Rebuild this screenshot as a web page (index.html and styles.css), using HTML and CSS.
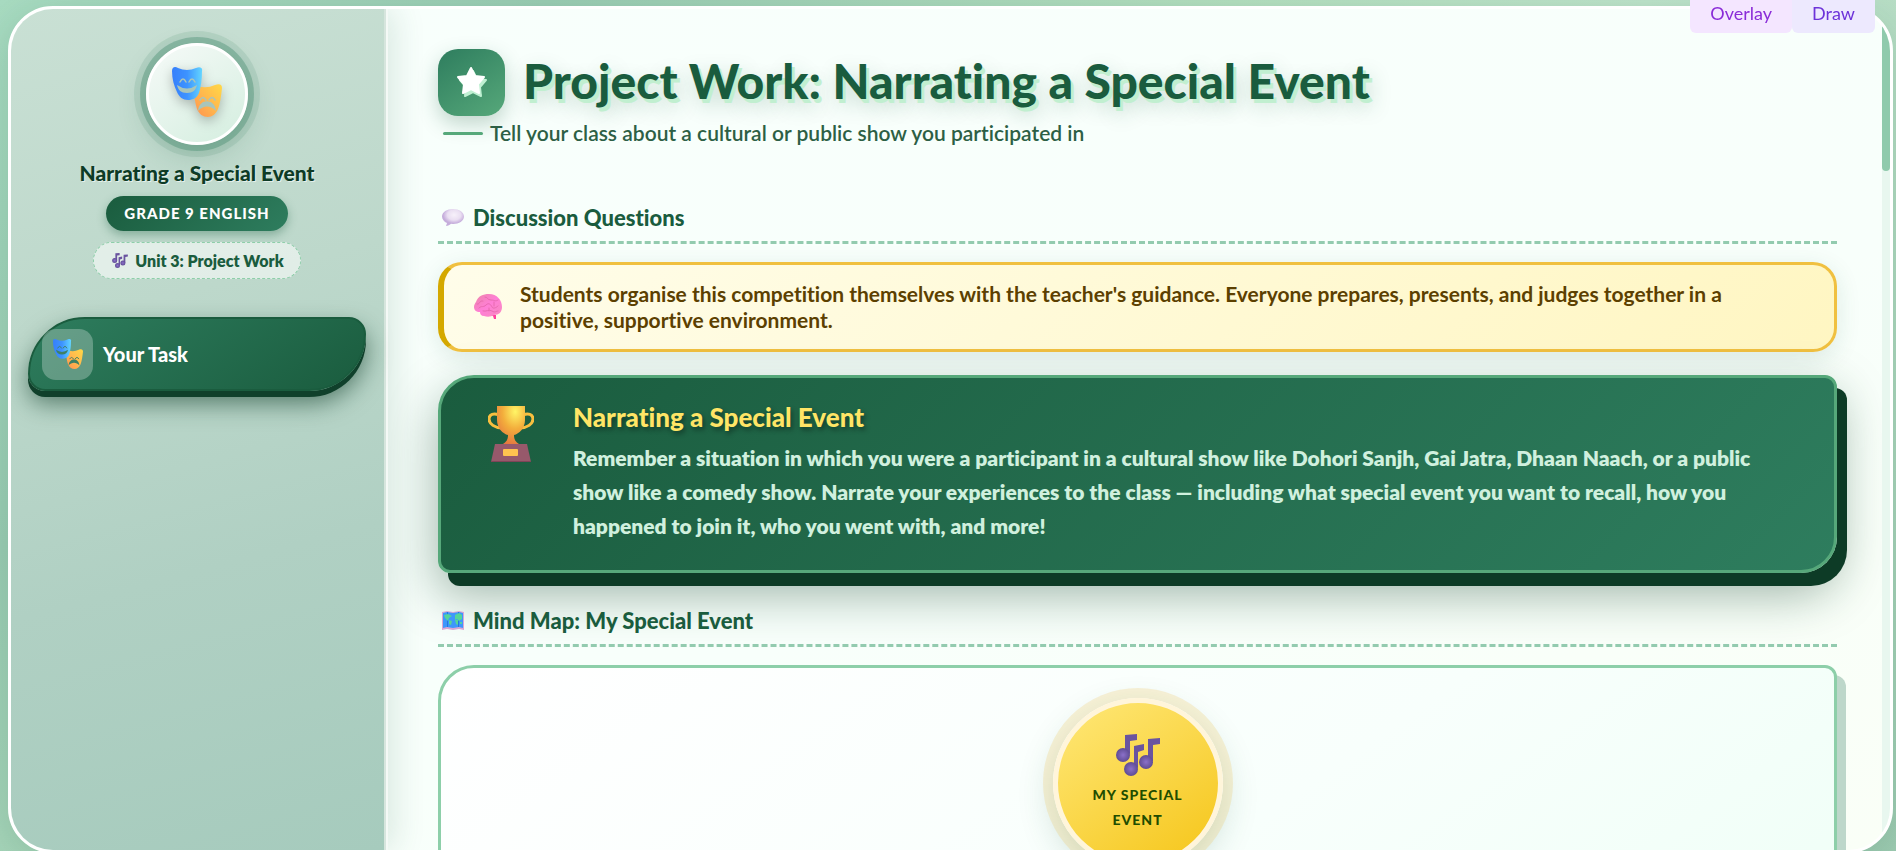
FILE: index.html
```html
<!DOCTYPE html>
<html lang="en">

<head>
  <meta charset="UTF-8">
  <meta name="viewport" content="width=device-width, initial-scale=1.0">
  <title>Project Work: Narrating a Special Event</title>
  <link rel="stylesheet" href="styles.css">
</head>

<body>
  <!-- shared icons -->
  <svg class="icon-defs" width="0" height="0" aria-hidden="true">
    <defs>
      <linearGradient id="blueMask" x1="0" y1="0" x2="1" y2="0">
        <stop offset="0" stop-color="#367ffb" />
        <stop offset="0.5" stop-color="#3d93ff" />
        <stop offset="1" stop-color="#64d6ff" />
      </linearGradient>
      <linearGradient id="goldMask" x1="0" y1="1" x2="1" y2="0">
        <stop offset="0" stop-color="#ff9150" />
        <stop offset="0.5" stop-color="#ffb84e" />
        <stop offset="1" stop-color="#ffd946" />
      </linearGradient>
      <radialGradient id="noteBall">
        <stop offset="0" stop-color="#8b70c9" />
        <stop offset="1" stop-color="#5f4c94" />
      </radialGradient>
      <symbol id="masks" viewBox="0 0 50 50">
        <path fill="url(#goldMask)" d="M22 20q2-2 4-1 8 3 17-1c5-2 7 0 7 3-1 9-2 16-4 21-2 5-6 8-10 8-5 0-9-3-11-8-2-6-3-13-3-22z" />
        <path fill="url(#blueMask)" d="M0 4c0-4 3-5 6-3q9 4 18 0c4-2 7 0 6 3 0 8-1 16-3 22-2 5-6 7-11 7s-9-3-11-8C2 19 0 12 0 4z" />
        <path fill="currentColor" d="M5 18q10 7 20 0c-1 5-4 8-10 8s-9-3-10-8zM26 44c1-13 17-13 18 0-5-6-13-6-18 0z" />
        <path fill="none" stroke="currentColor" stroke-width="1.5" stroke-linecap="round" d="M8 15q3-6 6 0M17 15q3-6 6 0M28 33q3-5 6 0M37 33q3-5 6 0" />
      </symbol>
      <symbol id="notes" viewBox="0 0 44 42">
        <g fill="#6a549f">
          <path d="M9 18V1l12-1v6l-7 1v13zM18 32V12l10-2v6l-6 2v16zM32 27V5l12-1v6l-7 1v16z" />
          <circle cx="7" cy="21" r="7" fill="url(#noteBall)" />
          <circle cx="15" cy="35" r="7" fill="url(#noteBall)" />
          <circle cx="30" cy="28" r="7" fill="url(#noteBall)" />
        </g>
      </symbol>
    </defs>
  </svg>

  <div class="toolbar">
    <button type="button" class="tool-btn tool-overlay">Overlay</button>
    <button type="button" class="tool-btn tool-draw">Draw</button>
  </div>

  <div class="app">
    <aside class="sidebar">
      <div class="avatar"><svg width="50" height="50" aria-hidden="true"><use href="#masks" /></svg></div>
      <h2 class="sidebar-title">Narrating a Special Event</h2>
      <span class="grade-badge">Grade 9 English</span>
      <span class="unit-badge"><svg width="16" height="15" aria-hidden="true"><use href="#notes" /></svg>Unit 3: Project Work</span>
      <nav class="side-nav">
        <button type="button" class="nav-btn active">
          <span class="nav-icon"><svg width="30" height="30" aria-hidden="true"><use href="#masks" /></svg></span>
          Your Task
        </button>
      </nav>
    </aside>

    <main class="main">
      <header class="page-header">
        <div class="title-row">
          <div class="title-icon">
            <svg width="34" height="34" viewBox="0 0 34 34" aria-hidden="true">
              <path class="star-shadow" d="M18 5l4 8 9 1-6 7 1 9-8-4-8 4 1-9-6-7 9-1z" />
              <path class="star" d="M16 2l4 8 9 1-6 7 1 9-8-4-8 4 1-9-6-7 9-1z" />
            </svg>
          </div>
          <h1 class="page-title">Project Work: Narrating a Special Event</h1>
        </div>
        <p class="page-subtitle">Tell your class about a cultural or public show you participated in</p>
      </header>

      <section class="section">
        <h3 class="section-title">
          <svg width="22" height="18" viewBox="0 0 22 18" aria-hidden="true">
            <defs>
              <radialGradient id="bubble" cx="0.55" cy="0.35">
                <stop offset="0" stop-color="#f7f1fa" />
                <stop offset="0.6" stop-color="#eadff2" />
                <stop offset="1" stop-color="#c5addb" />
              </radialGradient>
            </defs>
            <path fill="url(#bubble)" d="M11 0c6 0 11 3 11 7.500S17 15 11 15l-2-.2C8 16 6 17 4 17l1-3C2 13 0 10 0 7.500 0 3 5 0 11 0z" />
          </svg>
          Discussion Questions
        </h3>

        <div class="info-box">
          <svg width="28" height="26" viewBox="0 0 28 26" aria-hidden="true">
            <defs>
              <linearGradient id="brain" x1="0" y1="0" x2="1" y2="1">
                <stop offset="0" stop-color="#ed86a8" />
                <stop offset="0.5" stop-color="#ff7fd6" />
                <stop offset="1" stop-color="#f88abf" />
              </linearGradient>
            </defs>
            <path fill="#ff3f9f" d="M16 21h6v4l-2 0-1-3z" />
            <path fill="url(#brain)" d="M2 8C4 2 9 0 15 0c8 0 13 6 13 13 0 5-3 8-8 8-3 2-7 2-10 1-3 0-4-2-4-4-4 0-6-2-6-5 0-2 1-4 2-5z" />
            <path fill="none" stroke="#e86bb0" stroke-width="1" stroke-linecap="round" d="M3 10c3 1 2-4 6-3M11 3c3 0 2 3 6 3s4 2 7 0M5 14c3-3 4 0 7-3s5 0 6 2 4 1 6-1M9 17c3 1 6-2 9 0s4 0 6 0M20 8v4M15 17v-3" />
          </svg>
          <p>Students organise this competition themselves with the teacher's guidance. Everyone prepares, presents, and judges together in a positive, supportive environment.</p>
        </div>

        <div class="task-card">
          <svg width="46" height="56" viewBox="0 0 46 56" aria-hidden="true">
            <defs>
              <radialGradient id="cup" cx="0.65" cy="0.15" r="0.9">
                <stop offset="0" stop-color="#fff566" />
                <stop offset="0.5" stop-color="#f3ae3c" />
                <stop offset="1" stop-color="#e5763f" />
              </radialGradient>
            </defs>
            <path class="cup-handle" d="M11 9C6 7 1 8 1 13s6 9 13 9M35 9c5-2 10-1 10 4s-6 9-13 9" />
            <path fill="url(#cup)" d="M9 0h28v14c0 8-6 14-11 15 0 5 2 7 5 9H15c3-2 5-4 5-9C15 28 9 22 9 14z" />
            <path fill="#97596b" d="M7 38h32l4 18H3z" />
            <path fill="#7f4458" d="M3 55h40v1H3z" />
            <rect x="15" y="43" width="15" height="7" rx="1" fill="#ffc34f" />
          </svg>
          <div class="task-body">
            <h2 class="task-title">Narrating a Special Event</h2>
            <p class="task-text">Remember a situation in which you were a participant in a cultural show like Dohori Sanjh, Gai Jatra, Dhaan Naach, or a public show like a comedy show. Narrate your experiences to the class — including what special event you want to recall, how you happened to join it, who you went with, and more!</p>
          </div>
        </div>
      </section>

      <section class="section">
        <h3 class="section-title">
          <svg width="22" height="20" viewBox="0 0 22 20" aria-hidden="true">
            <path fill="#d9a6d4" d="M0 1l5-1 6 1 6-1 5 1v18l-5-1-6 1-6-1-5 1z" />
            <path fill="#3e97fb" d="M1 2l4-1 6 1 6-1 4 1v15l-4-1-6 1-6-1-4 1z" />
            <path fill="#2479dc" d="M5 1l1 0v15l-1 0zM16 1l1 0v15l-1 0z" />
            <path fill="#55d59a" d="M2 4l4-1 4 2-3 2-1 3-3-3zM7 9l3 1-1 4-2-1zM13 4l4-2 3 2v4l-3 2-2-2-2 1zM13 9l3 0v5l-2-1zM18 11h2v2h-2z" />
          </svg>
          Mind Map: My Special Event
        </h3>

        <div class="mindmap">
          <div class="mindmap-center">
            <svg width="44" height="42" aria-hidden="true"><use href="#notes" /></svg>
            <span>My Special Event</span>
          </div>
        </div>
      </section>
    </main>

    <div class="scroll-track" aria-hidden="true">
      <div class="scroll-thumb"></div>
    </div>
  </div>
</body>

</html>
```
FILE: styles.css
```css
* {
  margin: 0;
  padding: 0;
  box-sizing: border-box;
}

body {
  font-family: Lato, 'Noto Sans', sans-serif;
  font-variant-ligatures: none;
  background: linear-gradient(135deg, #a8dbc1 0%, #9bccb4 20%, #b5dfc0 45%, #bfe3cb 60%, #9ecbb2 100%);
  height: 100vh;
  padding: 6px 3px 0 8px;
  overflow: hidden;
}

button {
  font-family: inherit;
  cursor: pointer;
}

svg {
  display: block;
  flex-shrink: 0;
}

.icon-defs {
  position: absolute;
}

/* floating tool buttons */
.toolbar {
  position: fixed;
  top: -7px;
  right: 21px;
  display: flex;
  z-index: 10;
}

.tool-btn {
  height: 40px;
  padding: 0 20px;
  border: none;
  border-radius: 6px;
  font-size: 18px;
}

.tool-overlay {
  background: #f4e6ff;
  color: #8a2bd8;
}

.tool-draw {
  background: #ede9fe;
  color: #6d33d9;
}

.app {
  display: flex;
  height: calc(100vh - 4px);
  border: 3px solid #fff;
  border-radius: 45px;
  background: linear-gradient(160deg, #f8fffc 0%, #f8fffb 60%, #fafff7 100%);
  box-shadow: 0 10px 40px rgba(26, 92, 62, 0.18);
  overflow: hidden;
}

/* sidebar */
.sidebar {
  flex: 0 0 377px;
  display: flex;
  flex-direction: column;
  align-items: center;
  padding: 34px 20px 20px 17px;
  background: linear-gradient(165deg, #c9e0d4 0%, #bdd8cb 35%, #b0d0c3 65%, #a6cbbd 100%);
  border-right: 2px solid #f4f9f6;
  box-shadow: inset -2px 0 0 #d6e5dd, 6px 0 30px rgba(26, 92, 62, 0.14);
  z-index: 1;
}

.avatar {
  display: flex;
  align-items: center;
  justify-content: center;
  width: 102px;
  height: 102px;
  padding-bottom: 4px;
  border: 3px solid #fff;
  border-radius: 50%;
  background: linear-gradient(145deg, #f6faf8, #d4eedf);
  box-shadow: 0 0 0 6px rgba(46, 125, 94, 0.32), 0 0 0 12px rgba(46, 125, 94, 0.12), 0 10px 30px rgba(26, 92, 62, 0.2);
  color: #a9c5ba;
}

.avatar svg {
  filter: drop-shadow(0 4px 6px rgba(0, 0, 0, 0.25));
}

.sidebar-title {
  margin-top: 14px;
  font-size: 21px;
  font-weight: 900;
  line-height: 28px;
  color: #0d3b26;
  text-shadow: 1px 1px 0 rgba(255, 255, 255, 0.6);
}

.grade-badge {
  margin-top: 9px;
  padding: 0 18px;
  border-radius: 18px;
  background: linear-gradient(135deg, #1a5c3e, #2e7d5e);
  box-shadow: 0 4px 10px rgba(26, 92, 62, 0.35);
  color: #fff;
  font-size: 15px;
  font-weight: 900;
  line-height: 35px;
  letter-spacing: 1px;
  text-transform: uppercase;
}

.unit-badge {
  display: flex;
  align-items: center;
  gap: 7px;
  height: 37px;
  margin-top: 11px;
  padding: 0 16px 0 18px;
  border: 1px dashed #8dcfa9;
  border-radius: 19px;
  background: rgba(255, 255, 255, 0.55);
  color: #1a5c3e;
  font-size: 16px;
  font-weight: 800;
}

.side-nav {
  width: 100%;
  margin-top: 38px;
}

.nav-btn {
  display: flex;
  align-items: center;
  gap: 10px;
  width: 100%;
  height: 74px;
  padding: 0 12px;
  border: 2px solid #1a5c3e;
  border-radius: 60px 18px 60px 18px;
  background: linear-gradient(145deg, #2e7d5e, #1a5c3e);
  box-shadow: 0 6px 0 #10402b, 0 12px 24px rgba(13, 59, 38, 0.6);
  color: #fff;
  font-size: 20px;
  font-weight: 900;
}

.nav-icon {
  display: flex;
  align-items: center;
  justify-content: center;
  width: 51px;
  height: 51px;
  border-radius: 14px;
  background: rgba(255, 255, 255, 0.27);
  color: #3d8065;
}

/* main column */
.main {
  flex: 1;
  min-width: 0;
  padding: 40px 45px 0 50px;
  overflow: hidden;
}

.title-row {
  display: flex;
  align-items: center;
  gap: 18px;
}

.title-icon {
  display: flex;
  align-items: center;
  justify-content: center;
  width: 67px;
  height: 67px;
  border-radius: 20px;
  background: linear-gradient(145deg, #2e7d5e, #56a87a);
  box-shadow: 0 8px 20px rgba(26, 92, 62, 0.25);
}

.star,
.star-shadow {
  fill: #fff;
  stroke: #fff;
  stroke-width: 2;
  stroke-linejoin: round;
}

.star-shadow {
  fill: #bff0d2;
  stroke: #bff0d2;
}

.page-title {
  margin-bottom: 4px;
  font-size: 48px;
  font-weight: 900;
  line-height: 60px;
  color: #1a5c3e;
  text-shadow: 3px 4px 0 #c1efd0, 4px 8px 20px rgba(26, 92, 62, 0.25);
}

.page-subtitle {
  display: flex;
  align-items: center;
  gap: 7px;
  margin-top: 2px;
  padding-left: 5px;
  font-size: 21px;
  font-weight: 600;
  line-height: 30px;
  color: #2d5f45;
}

.page-subtitle::before {
  content: '';
  width: 40px;
  height: 3px;
  border-radius: 2px;
  background: #56a87a;
}

.page-header {
  margin-bottom: 48px;
}

.section {
  margin-bottom: 26px;
}

.section-title {
  display: flex;
  align-items: center;
  gap: 9px;
  margin-bottom: 18px;
  padding: 6px 4px 7px;
  border-bottom: 3px dashed #93cbaf;
  font-size: 22px;
  font-weight: 900;
  line-height: 32px;
  color: #1a5c3e;
}

.info-box {
  display: flex;
  align-items: center;
  gap: 18px;
  margin-bottom: 23px;
  padding: 16px 30px;
  border: 3px solid #f0c040;
  border-left: 6px solid #d4a800;
  border-radius: 24px;
  background: linear-gradient(135deg, #fffdea, #fff6c2);
  box-shadow: 0 6px 24px rgba(26, 92, 62, 0.12);
  color: #5c4000;
  font-size: 21px;
  font-weight: 700;
  line-height: 26px;
}

.task-card {
  display: flex;
  gap: 39px;
  padding: 23px 30px 27px 47px;
  border: 3px solid #56a87a;
  border-radius: 36px 12px 36px 12px;
  background: linear-gradient(135deg, #1a5c3e, #2e7d5e);
  box-shadow: 10px 13px 0 #0d3b26, 0 20px 50px rgba(13, 59, 38, 0.4);
}

.task-card svg {
  margin-top: 5px;
}

.cup-handle {
  fill: none;
  stroke: #f7bf3f;
  stroke-width: 3;
}

.task-title {
  margin-bottom: 8px;
  font-size: 26px;
  font-weight: 900;
  line-height: 32px;
  color: #ffe566;
  text-shadow: 2px 3px 5px rgba(0, 0, 0, 0.4);
}

.task-text {
  font-size: 21px;
  font-weight: 800;
  line-height: 34px;
  color: #d0f0de;
}

.mindmap {
  display: flex;
  justify-content: center;
  min-height: 480px;
  padding: 30px;
  border: 3px solid #8dcfa9;
  border-radius: 36px 12px 36px 12px;
  background: linear-gradient(145deg, #fff, #f8fffc 50%, #ecfff5);
  box-shadow: 9px 10px 0 #bdd7ca;
}

.mindmap-center {
  display: flex;
  flex-direction: column;
  align-items: center;
  gap: 6px;
  width: 170px;
  height: 170px;
  padding: 31px 20px 0;
  border: 5px solid #fff5da;
  border-radius: 50%;
  background: linear-gradient(145deg, #ffe878, #f5c518);
  box-shadow: 0 0 0 10px rgba(240, 192, 64, 0.2), 0 12px 36px rgba(26, 92, 62, 0.2);
  color: #1f4d00;
  font-size: 14px;
  font-weight: 900;
  line-height: 25px;
  letter-spacing: 1px;
  text-align: center;
  text-transform: uppercase;
}

/* scrollbar */
.scroll-track {
  flex: 0 0 8px;
  background: #e8f7ef;
}

.scroll-thumb {
  height: 162px;
  border-radius: 4px;
  background: #8fcaac;
}
```
